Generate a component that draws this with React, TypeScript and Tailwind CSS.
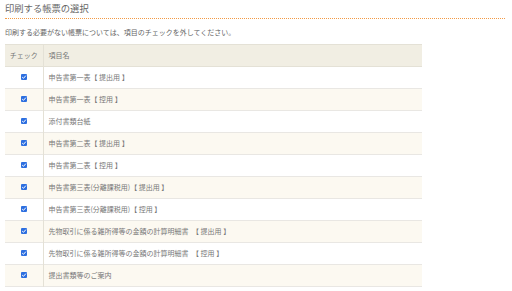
const rows = [
  "申告書第一表【 提出用 】",
  "申告書第一表【 控用 】",
  "添付書類台紙",
  "申告書第二表【 提出用 】",
  "申告書第二表【 控用 】",
  "申告書第三表(分離課税用)【 提出用 】",
  "申告書第三表(分離課税用)【 控用 】",
  "先物取引に係る雑所得等の金額の計算明細書　【 提出用 】",
  "先物取引に係る雑所得等の金額の計算明細書　【 控用 】",
  "提出書類等のご案内",
];

function Check() {
  return (
    <span className="inline-flex h-[6px] w-[6px] items-center justify-center rounded-[1px] bg-[#2d6fe0]">
      <svg viewBox="0 0 6 6" className="h-[6px] w-[6px]">
        <path d="M1.2 3.1 L2.5 4.3 L4.9 1.6" fill="none" stroke="#fff" strokeWidth="1" />
      </svg>
    </span>
  );
}

export default function App() {
  return (
    <div
      className="h-[291px] w-[512px] bg-white text-[#777]"
      style={{ fontFamily: '"Noto Sans CJK JP", "Noto Sans", sans-serif' }}
    >
      <div className="ml-[5px] w-[500px]">
        <div className="h-[19px] border-b border-dotted border-[#f39a45] text-[9.3px] leading-[16px] text-[#666]">
          印刷する帳票の選択
        </div>
        <p className="mt-[8px] text-[7px] leading-[10px] text-[#666]">
          印刷する必要がない帳票については、項目のチェックを外してください。
        </p>
        <table className="mt-[7px] w-[417px] border-collapse text-[7px]">
          <thead>
            <tr className="h-[22px] border-y border-[#e4e1d6] bg-[#f1eee3]">
              <th className="w-[38px] border-r border-[#e4e1d6] text-center font-normal">チェック</th>
              <th className="pl-[5px] text-left font-normal">項目名</th>
            </tr>
          </thead>
          <tbody>
            {rows.map((r, i) => (
              <tr
                key={r}
                className={`h-[22px] border-b border-[#e9e7e3] ${i % 2 ? "bg-[#fcf9f1]" : "bg-white"}`}
              >
                <td className="border-r border-[#e4e1d6] text-center leading-none">
                  <Check />
                </td>
                <td className="whitespace-pre pl-[5px]">{r}</td>
              </tr>
            ))}
          </tbody>
        </table>
      </div>
    </div>
  );
}
